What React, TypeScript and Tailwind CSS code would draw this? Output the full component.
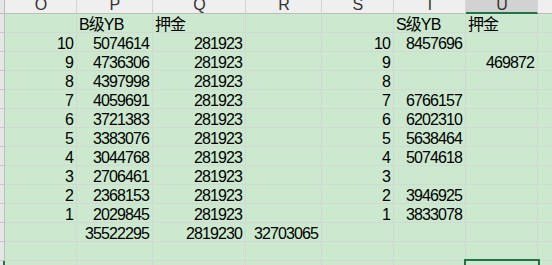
const COLS = ['O', 'P', 'Q', 'R', 'S', 'T', 'U']

// each row: [O, P, Q, R, S, T, U]
const ROWS: string[][] = [
  ['', 'B级YB', '押金', '', '', 'S级YB', '押金'],
  ['10', '5074614', '281923', '', '10', '8457696', ''],
  ['9', '4736306', '281923', '', '9', '', '469872'],
  ['8', '4397998', '281923', '', '8', '', ''],
  ['7', '4059691', '281923', '', '7', '6766157', ''],
  ['6', '3721383', '281923', '', '6', '6202310', ''],
  ['5', '3383076', '281923', '', '5', '5638464', ''],
  ['4', '3044768', '281923', '', '4', '5074618', ''],
  ['3', '2706461', '281923', '', '3', '', ''],
  ['2', '2368153', '281923', '', '2', '3946925', ''],
  ['1', '2029845', '281923', '', '1', '3833078', ''],
  ['', '35522295', '2819230', '32703065', '', '', ''],
  ['', '', '', '', '', '', ''],
  ['', '', '', '', '', '', ''],
]

const isNum = (v: string) => /^\d+$/.test(v)

function Cell({ value, selected }: { value: string; selected?: boolean }) {
  return (
    <div className="relative h-[19px] bg-[#cce8cf] border-r border-b border-[#d2d8d2] overflow-visible">
      <div
        className={
          'h-full overflow-hidden whitespace-nowrap pt-[3px] leading-[15px] ' +
          (isNum(value) ? 'text-right pr-[3px]' : 'text-left pl-[2px]')
        }
      >
        {value}
      </div>
      {selected && (
        <div className="absolute -left-[2px] -top-[2px] w-[76px] h-[22px] border-2 border-[#217346]" />
      )}
    </div>
  )
}

export default function App() {
  return (
    <div className="w-[552px] h-[265px] overflow-hidden bg-white font-['Liberation_Sans','Noto_Sans_CJK_SC',sans-serif] text-[16px] tracking-[-0.9px] text-black">
      <div className="grid grid-cols-[5px_72px_76px_93px_76px_72px_72px_72px_1fr]">
        {/* column headers */}
        <div className="h-[14px] bg-[#e6e6e6] border-r border-b border-[#bdbdbd]" />
        {COLS.map(c => (
          <div
            key={c}
            className={
              'h-[14px] overflow-hidden text-center border-r border-[#d4d4d4] ' +
              (c === 'U'
                ? 'bg-[#d2d2d2] border-b-2 border-b-[#217346]'
                : 'bg-[#efefef] border-b border-b-[#bdbdbd]')
            }
          >
            <span className="block -mt-[3px] leading-[16px] text-[#333]">{c}</span>
          </div>
        ))}
        <div className="h-[14px] bg-[#efefef] border-b border-[#bdbdbd]" />

        {ROWS.map((row, ri) => (
          <div key={ri} className="contents">
            <div
              className={
                'h-[19px] bg-[#e6e6e6] border-b border-b-[#c8c8c8] ' +
                (ri === ROWS.length - 1 ? 'border-r-2 border-r-[#217346]' : 'border-r border-r-[#bdbdbd]')
              }
            />
            {row.map((v, ci) => (
              <Cell key={ci} value={v} selected={ri === ROWS.length - 1 && ci === 6} />
            ))}
            <div className="h-[19px] bg-[#cce8cf] border-b border-[#d2d8d2]" />
          </div>
        ))}
      </div>
    </div>
  )
}
